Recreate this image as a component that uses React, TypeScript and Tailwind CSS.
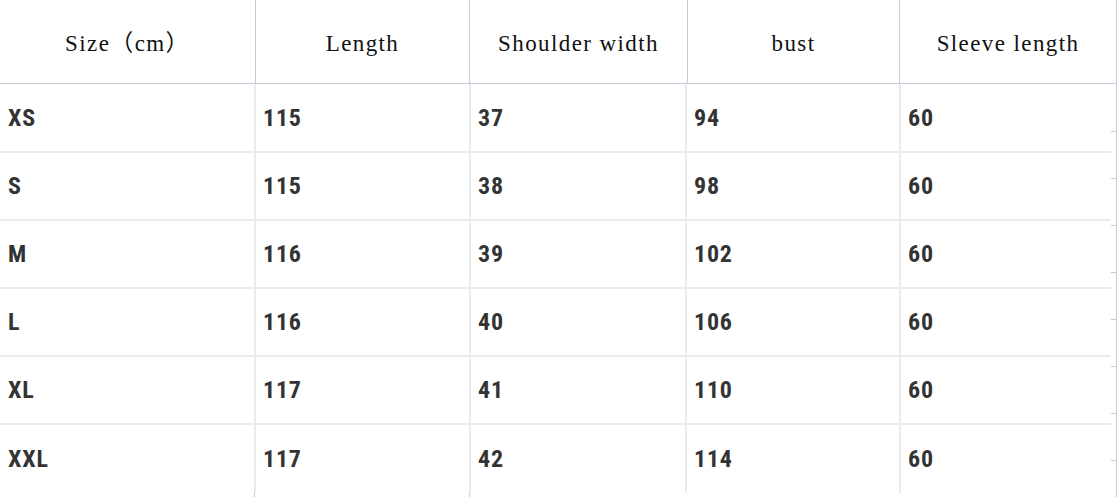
import React from 'react';

const headers = ['Size（cm）', 'Length', 'Shoulder width', 'bust', 'Sleeve length'];

const rows: [string, number, number, number, number][] = [
  ['XS', 115, 37, 94, 60],
  ['S', 115, 38, 98, 60],
  ['M', 116, 39, 102, 60],
  ['L', 116, 40, 106, 60],
  ['XL', 117, 41, 110, 60],
  ['XXL', 117, 42, 114, 60],
];

const headWidths = ['w-[256px]', 'w-[214px]', 'w-[218px]', 'w-[212px]', 'w-[217px]'];
const bodyWidths = ['w-[256px] pl-[8px]', 'w-[215px] pl-[7px]', 'w-[216px] pl-[7px]', 'w-[214px] pl-[7px]', 'w-[210px] pl-[7px]'];

export default function App() {
  return (
    <div className="w-[1117px] h-[497px] bg-white flex flex-col overflow-hidden">
      {/* header strip */}
      <div className="flex h-[84px] border-b border-[#c6cad9]">
        {headers.map((h, i) => (
          <div key={h}
            className={`${headWidths[i]} shrink-0 border-r border-[#c6cad9] flex items-center justify-center pt-[5px] text-[23px] tracking-[1.4px] text-[#111] font-['Liberation_Serif','Noto_Sans_CJK_SC',serif]`}>
            {h}
          </div>
        ))}
      </div>

      <div className="flex flex-1">
        <div className="w-[1111px] flex flex-col">
          {rows.map((r, i) => (
            <div key={r[0]} className={rowClass(i)}>
              {r.map((v, j) => (
                <div key={j}
                  className={`${bodyWidths[j]} shrink-0 flex items-center ${j < 4 ? 'border-r-2 border-[#ebebeb]' : ''} text-[24px] font-bold tracking-[0.8px] text-[#333] font-['Liberation_Sans_Narrow','Roboto_Condensed','Liberation_Sans',sans-serif]`}>
                  {v}
                </div>
              ))}
            </div>
          ))}
          {/* bottom stubs */}
          <div className="flex h-[4px]">
            <div className="w-[255px] shrink-0 border-r border-[#c6cad9]" />
            <div className="w-[215px] shrink-0 border-r border-[#c6cad9]" />
          </div>
        </div>
        {/* right rail with ticks */}
        <div className="w-[6px] border-r border-[#c6cad9] flex flex-col pt-[47px] gap-[46px]">
          {Array.from({ length: 8 }).map((_, i) => (
            <div key={i} className="h-px bg-[#c6cad9]" />
          ))}
        </div>
      </div>
    </div>
  );
}

function rowClass(i: number) {
  if (i === 0) return 'flex h-[69px] border-b-2 border-[#ebebeb]';
  if (i === 5) return 'flex h-[68px]';
  return 'flex h-[68px] border-b-2 border-[#ebebeb]';
}
